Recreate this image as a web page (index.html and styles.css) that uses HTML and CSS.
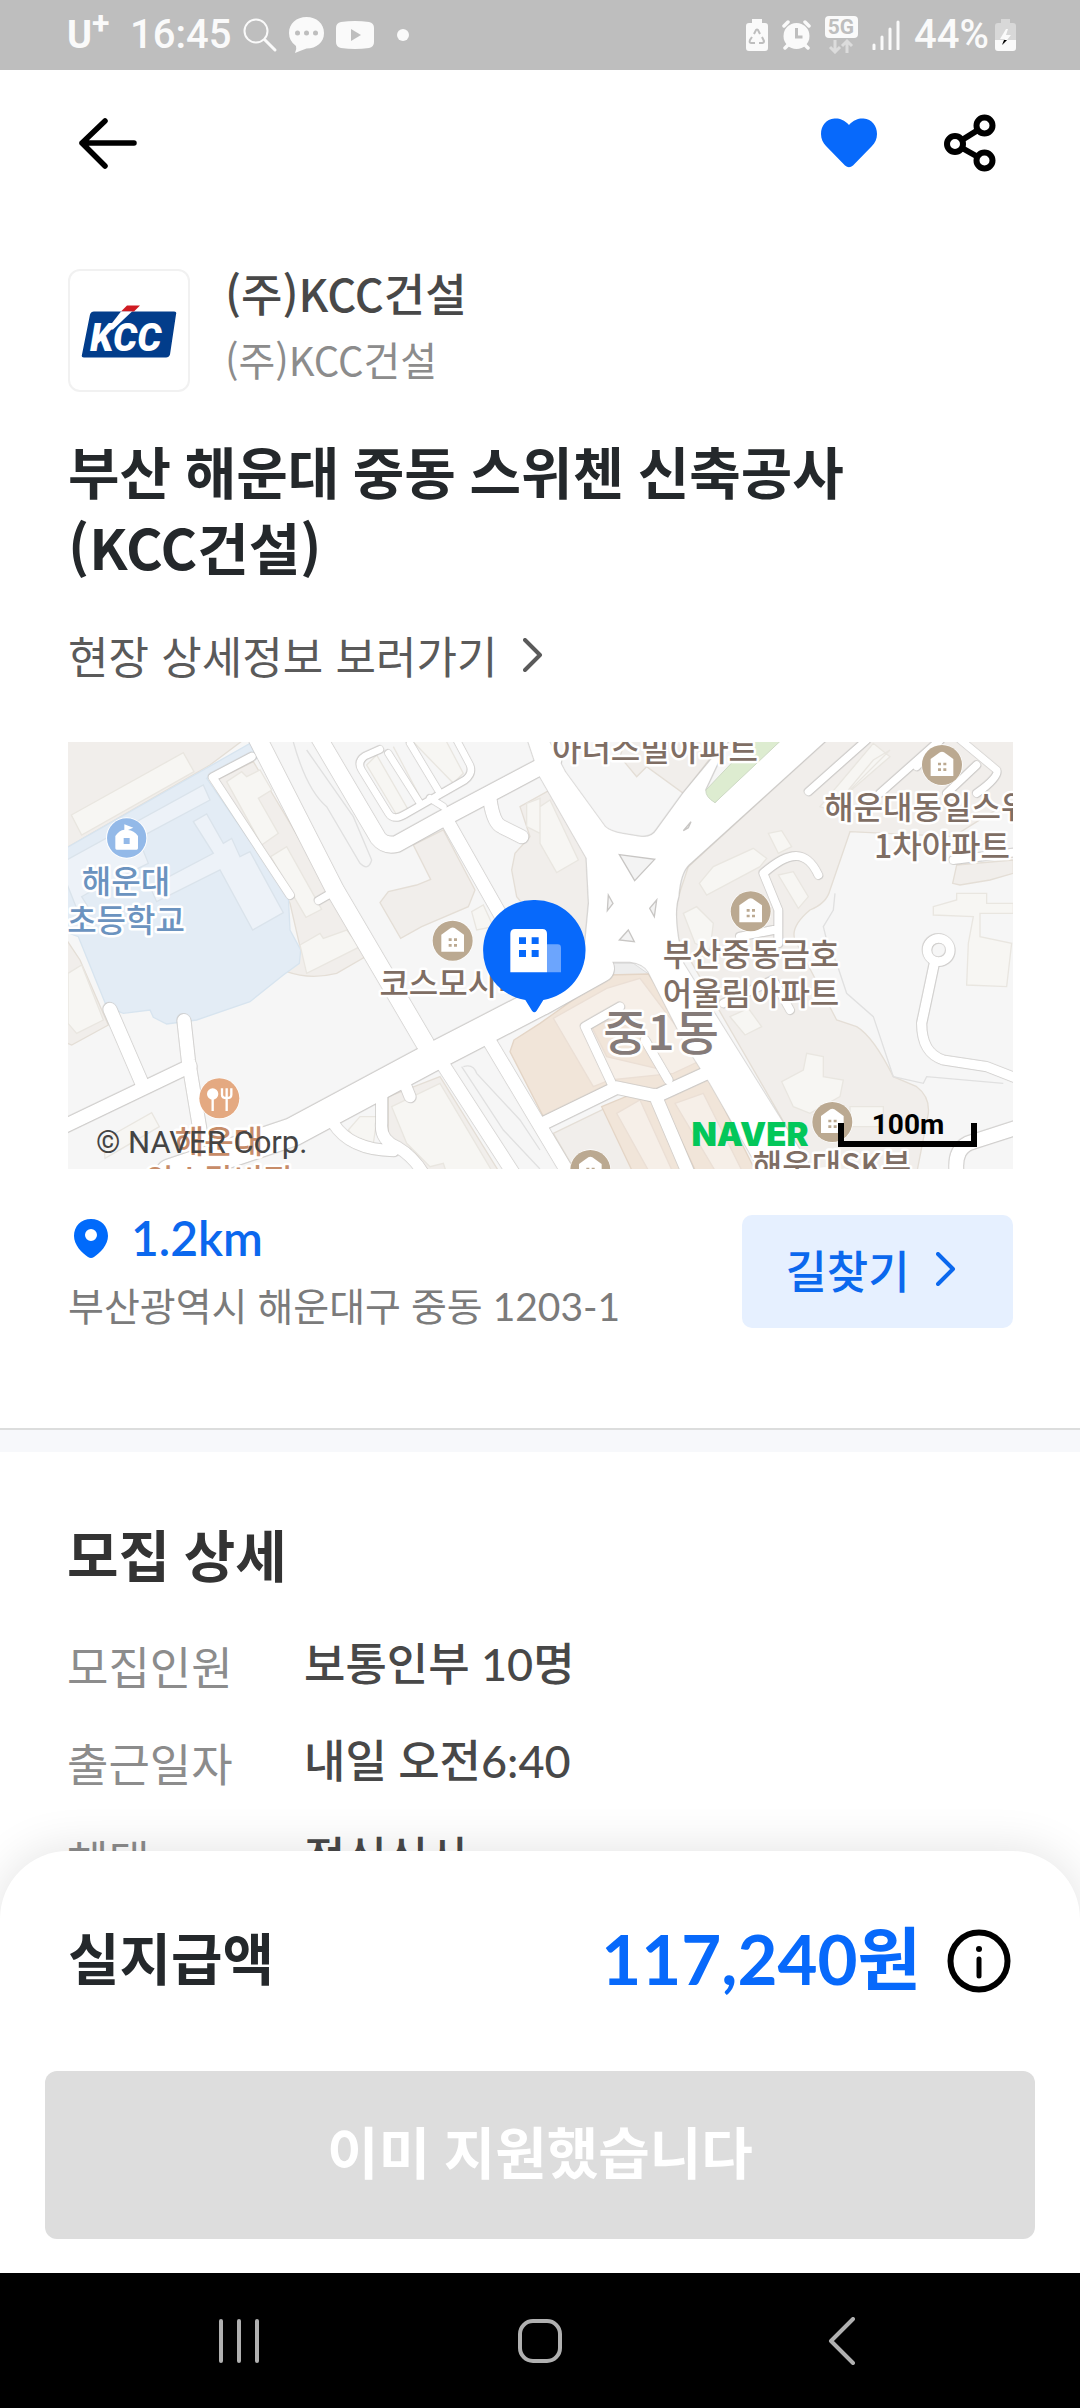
FILE: index.html
```html
<!DOCTYPE html>
<html lang="ko">
<head>
<meta charset="utf-8">
<meta name="viewport" content="width=device-width, initial-scale=1">
<title>부산 해운대 중동 스위첸 신축공사</title>
<link rel="stylesheet" href="styles.css">
</head>
<body>
<div class="status">
  <div class="status-group status-left">
    <span class="carrier">U<sup>+</sup></span>
    <span class="status-text">16:45</span>
    <svg width="36" height="36" viewBox="0 0 36 36" fill="none" stroke="#fafafa" stroke-width="2" stroke-linecap="round"><circle cx="14" cy="14" r="11.500"/><path d="M23 23l10 10" stroke-width="3"/></svg>
    <svg width="36" height="36" viewBox="0 0 36 36"><path fill="#fafafa" d="M17.500 0C27.500 0 35 6.500 35 16S27.500 31.500 17.500 31.500Q12 33.500 6 36Q8 32 7 29Q0 24 0 16C0 6.500 7.500 0 17.500 0z"/><g fill="#bebebe"><circle cx="8.500" cy="16" r="2.500"/><circle cx="17.500" cy="16" r="2.500"/><circle cx="26.500" cy="16" r="2.500"/></g></svg>
    <svg width="38" height="28" viewBox="0 0 38 28"><path fill="#fafafa" d="M5 1Q19-1 33 1Q38 2 38 7V21Q38 26 33 27Q19 29 5 27Q0 26 0 21V7Q0 2 5 1z"/><path fill="#bebebe" d="M15 8l10 6-10 6z"/></svg>
    <svg width="32" height="12" viewBox="0 0 32 12"><circle cx="18" cy="6" r="6" fill="#fafafa"/></svg>
  </div>
  <div class="status-group status-right">
    <svg width="22" height="32" viewBox="0 0 22 32"><path fill="#fafafa" d="M6 0h10v4h3q3 0 3 3v22q0 3-3 3H3q-3 0-3-3V7q0-3 3-3h3z"/><path d="M8 15l2-4q1-1 2 0l2 4M16 18l2 4q0 2-2 2h-3M9 24H5q-2 0-1-3l2-3" fill="none" stroke="#bebebe" stroke-width="2"/></svg>
    <svg width="29" height="30" viewBox="0 0 29 30"><g fill="none" stroke="#fafafa" stroke-width="3.500" stroke-linecap="round"><path d="M2 6l4-4M23 2l4 4M6 25l-3 3M23 25l3 3"/></g><circle cx="14.500" cy="16" r="13" fill="#fafafa"/><path d="M14.500 8v9h6" fill="none" stroke="#bebebe" stroke-width="3"/></svg>
    <svg width="33" height="38" viewBox="0 0 33 38"><rect width="33" height="22" rx="4" fill="#fafafa"/><text class="net" x="16" y="18" text-anchor="middle">5G</text><path d="M10 24v12M5 31l5 5 5-5M22 37V25M17 30l5-5 5 5" fill="none" stroke="#dcdcdc" stroke-width="3"/></svg>
    <svg width="28" height="30" viewBox="0 0 28 30"><path d="M2 25v4M10 17v12M18 9v20M26 2v27" stroke="#fafafa" stroke-width="3" stroke-linecap="round"/></svg>
    <span class="battery"><span class="status-text">44%</span><svg width="21" height="32" viewBox="0 0 21 32"><path fill="#d8d8d8" d="M6 0h9v4h3q3 0 3 3v14H0V7q0-3 3-3h3z"/><path fill="#fafafa" d="M0 21h21v8q0 3-3 3H3q-3 0-3-3zM11 10l-6 10h5l-2 6 8-10h-5l2-6z"/><path d="M9 21h3l-5 5z"/></svg></span>
  </div>
</div>

<header class="topbar">
  <button class="icon-button" type="button" aria-label="뒤로"><svg width="58" height="54" viewBox="0 0 58 54" fill="none" stroke="#000" stroke-width="5.500" stroke-linecap="round" stroke-linejoin="round"><path d="M26 5L3 27l23 23M3 27h52"/></svg></button>
  <div class="actions">
    <button class="icon-button" type="button" aria-label="찜하기" aria-pressed="true"><svg width="58" height="50" viewBox="0 0 58 50"><path fill="#0769fb" d="M29 7C24 1 18 0 14.500 0.500C6 1 1 8 1 16C1 21 3 25 6 28L25 47.500Q29 51 33 47.500L52 28C55 25 57 21 57 16C57 8 52 1 43.500 0.500C40 0 34 1 29 7z"/></svg></button>
    <button class="icon-button" type="button" aria-label="공유"><svg width="52" height="58" viewBox="0 0 52 58" fill="none" stroke="#000" stroke-width="6"><circle cx="11" cy="30" r="8"/><circle cx="40.500" cy="11.500" r="8"/><circle cx="40.500" cy="46.500" r="8"/><path d="M18 26l16-10M18 34l16 9"/></svg></button>
  </div>
</header>

<main class="content">
  <section class="job">
    <div class="company">
      <svg class="logo" viewBox="0 0 118 118" role="img" aria-label="KCC"><path fill="#023d8b" d="M24 40H104Q107 40 106 43L100 83Q99 86 96 86H14Q11 86 12 83L20 43Q21 40 24 40z"/><path fill="#cf1b22" d="M57 34h13l-6 6H51z"/><path fill="#fff" d="M51 40h11L43 58h-6z"/><text class="logo-text" x="20" y="79">KCC</text></svg>
      <div class="company-names">
        <p class="company-name">(주)KCC건설</p>
        <p class="company-sub">(주)KCC건설</p>
      </div>
    </div>
    <h1 class="title">부산 해운대 중동 스위첸 신축공사<span class="builder">(KCC건설)</span></h1>
    <a class="detail-link" href="#site">현장 상세정보 보러가기<svg width="20" height="34" viewBox="0 0 20 34" fill="none" stroke="currentColor" stroke-width="4" stroke-linecap="round" stroke-linejoin="round"><path d="M2 2l15 15L2 32"/></svg></a>

    <svg class="map" viewBox="0 0 945 427" role="img" aria-label="현장 지도">
      <defs>
        <g id="poi"><circle r="62" fill="#fff"/><circle r="60" fill="#bba991"/><path fill="#fff" d="M-34 33V-18L-6-38Q0-41 6-38L34-18V33z"/><path fill="#bba991" d="M-12-7h9v8h-9zM4-7h9v8H4zM-12 10h9v8h-9zM4 10h9v8H4z"/></g>
      </defs>
      <rect width="945" height="427" fill="#f6f6f6"/>
      <g transform="translate(-8 -12) scale(0.33333)">
        <g fill="#f1eeeb" stroke="#e4ded6" stroke-width="4">
          <path d="M0 0H590L450 105L0 365z"/>
          <path d="M470 150L580 95L925 675L830 730Q750 750 680 725L720 650L690 520z"/>
          <path d="M0 600L60 690L145 885L35 945L0 930z"/>
          <path d="M1060 345L1150 300L1245 480L1225 530L1085 590L1022 625L960 518L985 485L1070 465L1112 448z"/>
          <path d="M1380 230L1470 180L1590 400L1585 640L1420 560L1370 500L1355 420L1365 370L1410 320z"/>
          <path d="M1680 80L1700 20H2000L1870 190L1760 110L1730 140z"/>
          <path d="M1885 410L2310 20H2870V210L2790 250L2680 320L2370 305L2310 480Q2300 520 2250 540Q2190 590 2205 630L2330 870L2390 890Q2440 920 2500 1040L2570 1070Q2610 1100 2605 1150L2570 1330H2260L1850 620Q1840 560 1855 500z"/>
          <path d="M2690 405L2860 390V430L2790 450L2700 465L2678 460z"/>
          <path d="M985 1100L1140 1040L1320 1330H1110L1060 1260L985 1230zM1480 1210L1635 1135L1730 1330H1550z"/>
        </g>
        <path fill="#e3ecf5" stroke="#d7e4ef" stroke-width="4" d="M0 365L570 40L590 85L440 145L685 500L690 600L722 660L718 700L670 735L570 815L410 870L320 882L280 862L270 840L190 850L140 830L55 620L0 600z"/>
        <g fill="#edf2f8" stroke="#dae3eb" stroke-width="4">
          <path d="M20 390L430 165L450 210L235 325L265 400L100 480L65 500L90 540L60 560L20 460z"/>
          <path d="M400 275L440 252L490 340L515 325L540 380L570 365L670 548L578 600L480 420L290 515L270 470L460 370z"/>
        </g>
        <g fill="#f7f6f3" stroke="#e9e6e0" stroke-width="4">
          <path d="M34 255L370 68L402 125L65 315z"/>
          <path d="M500 155L545 125L560 140L600 120L635 180L595 205L655 310L605 345z"/>
          <path d="M632 380L680 350L785 538L738 562z"/>
          <path d="M720 645L780 610L790 625L860 600L900 650L740 730z"/>
          <path d="M24 730L65 705L130 870L50 910L24 880z"/>
          <path d="M130 1230L275 1148L298 1190L135 1285zM865 1200L900 1160L952 1160L940 1240L880 1220z"/>
          <path d="M995 1130L1140 1060L1300 1330H1160L1150 1300L1110 1310L1040 1240z"/>
          <path d="M1400 220L1440 205V310L1400 290zM1440 230L1470 210L1555 390L1490 428L1440 340z"/>
          <path d="M1235 545L1270 525L1300 590L1250 600z"/>
          <path d="M1918 460L1960 410L2080 355L2120 385L2100 410L1940 495z"/>
          <path d="M2155 435L2200 425L2245 500L2215 535zM1870 550L1910 530L1960 580L1950 660L1905 640z"/>
          <path d="M2125 310L2165 302L2195 350L2155 370z"/>
          <path d="M2165 1055L2230 1020L2240 970L2290 980V1040L2350 1050L2340 1100L2250 1150L2200 1130z"/>
          <path d="M2010 860L2065 835L2105 890L2055 915z"/>
          <path d="M2340 210L2440 90L2490 60L2310 240L2280 230L2440 40L2490 80zM2370 1130H2470V1190H2370z"/>
          <path d="M920 105L950 75L1045 240L1010 255zM1000 50L1085 210M1060 36L1180 160L1210 130L1160 36"/>
          <path d="M2620 530L2690 510V490H2780V520H2860V550H2760V620L2855 640L2840 770L2720 765L2725 640L2740 560L2620 555z"/>
        </g>
        <path fill="#ededed" stroke="#ddd" stroke-width="3" d="M1440 895L1500 840L1640 700H1720L1770 735L1650 735z"/>
        <g fill="#f1e5d9" stroke="#e4d5c6" stroke-width="4">
          <path d="M1362 930L1440 880L1645 735L1765 732L1945 1015L1850 1055L1780 1080L1650 1062L1450 1160L1350 965z"/>
          <path d="M1625 1130L1710 1095L1790 1120L1870 1330H1720zM1805 1105L1945 1040L2090 1330H1910z"/>
        </g>
        <g fill="#f6efe8" stroke="#ebdfd5" stroke-width="4">
          <path d="M1480 865L1640 775L1740 745L1925 990L1840 1030L1650 1050L1600 1070z"/>
          <path fill="#f1e5d9" d="M1595 890L1700 850L1810 1020L1640 980z"/>
          <path d="M1670 1150L1740 1110L1840 1330H1770zM1845 1120L1930 1090L2050 1330H1970z"/>
        </g>
        <path fill="none" stroke="#e0e0e0" stroke-width="4" d="M700 36Q740 180 800 230L900 400Q925 425 935 390L880 260L740 60M1205 1010L1330 1200L1440 1317M1210 1010Q1240 1000 1250 1030L1380 1170L1440 1260M2325 490L2320 540L2290 590L2300 630L2330 700L2360 790L2440 860L2500 1040L2590 1060L2600 1040L2830 1060"/>
        <g class="roads">
          <path d="M590 20L825 480L1095 940" stroke-width="54"/>
          <path d="M575 80L458 142L690 495" stroke-width="24"/>
          <path d="M775 512L830 480" stroke-width="22"/>
          <path d="M10 1190L390 1008" stroke-width="40"/>
          <path d="M150 838L248 1065M372 872L385 990L425 1230" stroke-width="40"/>
          <path d="M330 1330L700 1205L1110 985L1440 815L1620 715" stroke-width="84"/>
          <path d="M775 20L955 325Q975 350 1010 342L1140 270L1480 90" stroke-width="48"/>
          <path d="M1160 270L1330 570L1420 700" stroke-width="40"/>
          <path d="M1150 230L1110 205M1040 250Q1000 275 985 250L905 120Q890 95 915 78L960 58M1190 30L1230 105Q1240 130 1215 150L1040 250M985 70L1080 220M1050 40L1140 190" stroke-width="20"/>
          <path d="M1290 210Q1300 280 1325 290L1385 320" stroke-width="40"/>
          <path d="M1140 990L1360 1330M1280 920L1525 1330" stroke-width="40"/>
          <path d="M965 1090V1180Q960 1230 1010 1250Q1060 1280 1090 1330M820 1180Q870 1260 1000 1262M1030 1050L1050 1100" stroke-width="34"/>
          <path d="M1440 1185L1670 1073L1790 1098L1960 1020M1785 1095L1885 1330" stroke-width="38"/>
          <path d="M1655 1060L1575 890L1680 830M1825 1050L1755 930" stroke-width="26"/>
          <path d="M2275 435C2240 360 2190 360 2110 430L2155 540V640M2040 620L2140 600M1990 820L2140 750L2190 840" stroke-width="24"/>
          <path d="M2624 695L2585 880Q2585 970 2650 990L2780 1010L2870 1045" stroke-width="28"/>
          <circle cx="2636" cy="660" r="35" stroke-width="26"/>
          <path d="M2245 185L2420 30M2460 190L2640 30M2570 110L2650 20M2690 20L2810 120Q2820 140 2750 190M2660 190L2750 105" stroke-width="22"/>
          <path d="M2690 1330Q2680 1250 2740 1235L2880 1190" stroke-width="42"/>
          <path d="M2680 390L2880 365" stroke-width="24"/>
          <path fill="#fff" d="M1400 20L1440 140L1580 385L1587 520L1570 700L1620 695H1710Q1750 700 1765 725L1880 950L1950 1060L2110 1340H2270L1870 700Q1835 560 1855 500Q1860 430 1885 405L2310 20H2150L1965 220L1935 180L2010 20L1870 190L1790 300Q1775 325 1740 320L1690 312Q1650 305 1635 290L1515 125L1460 20z"/>
        </g>
        <path fill="#ddecd0" stroke="#cdd9c4" stroke-width="3" d="M1938 180L2090 20H2175L1965 218Q1935 200 1938 180z"/>
        <path fill="#f3f3f3" stroke="#c8c6c4" stroke-width="4" d="M1678 374L1784 388L1724 452zM1645 495L1659 520L1642 542zM1790 510L1769 535L1783 560zM1705 600L1723 635L1678 630zM1893 275L1870 302L1885 293z"/>
        <g><circle cx="200" cy="324" r="62" fill="#fff"/><circle cx="200" cy="324" r="59" fill="#93b9e8"/><path fill="#fff" d="M166 355V318Q178 300 193 299V283L220 293L204 300Q222 301 234 318V355Q234 359 230 359H170Q166 359 166 355z"/><path fill="#93b9e8" d="M191 324h18v18h-18z"/></g>
        <g><circle cx="478" cy="1105" r="62" fill="#fff"/><circle cx="478" cy="1105" r="60" fill="#e4a981"/><circle cx="458" cy="1092" r="17" fill="#fff"/><path fill="none" stroke="#fff" stroke-width="7" d="M458 1100V1143M486 1075V1094Q486 1104 500 1104T514 1094V1075M500 1075V1143"/></g>
        <use href="#poi" x="1178" y="632"/>
        <use href="#poi" x="2646" y="105"/>
        <use href="#poi" x="2072" y="544"/>
        <use href="#poi" x="2317" y="1176"/>
        <use href="#poi" x="1591" y="1320"/>
      </g>
      <g class="place">
        <text class="school" x="58" y="151">해운대</text>
        <text class="school" x="58" y="190">초등학교</text>
        <text class="food" x="151" y="411">해운대</text>
        <text class="food" x="151" y="450">암소갈비집</text>
        <text x="385" y="253">코스모시티</text>
        <text x="587" y="19">아너스빌아파트</text>
        <text x="874" y="77">해운대동일스위첸</text>
        <text x="874" y="116">1차아파트</text>
        <text x="683" y="224">부산중동금호</text>
        <text x="683" y="263">어울림아파트</text>
        <text x="764" y="435">해운대SK뷰</text>
        <text class="district" x="593" y="308">중1동</text>
      </g>
      <g transform="translate(-8 -12) scale(0.33333)">
        <path fill="#0769fb" d="M1423 510A151 151 0 0 1 1450 810L1430 842Q1423 852 1416 842L1396 810A151 151 0 0 1 1423 510z"/>
        <path fill="#6ca5fd" d="M1461 643H1493Q1503 643 1503 653V727H1461z"/>
        <path fill="#fff" d="M1351 727V611Q1351 597 1365 597H1447Q1461 597 1461 611V727z"/>
        <path fill="#0769fb" d="M1377 622h21v20h-21zM1415 622h21v20h-21zM1377 660h21v21h-21zM1415 660h21v21h-21z"/>
      </g>
      <text class="naver" x="682" y="404" text-anchor="middle">NAVER</text>
      <path d="M773 381V402H906V381" fill="none" stroke="#000" stroke-width="6"/>
      <text class="scale" x="840" y="392" text-anchor="middle">100m</text>
      <text class="copyright" x="28" y="411">© NAVER Corp.</text>
    </svg>

    <div class="location">
      <div>
        <p class="distance"><svg width="46" height="45" viewBox="0 0 46 45"><path fill="#006afb" fill-rule="evenodd" d="M23 3C13 3 6 10 6 20C6 29 14 37 20 41Q23 43 26 41C32 37 40 29 40 20C40 10 33 3 23 3zM23 13A6 6 0 1 1 23 25A6 6 0 1 1 23 13z"/></svg>1.2km</p>
        <p class="address">부산광역시 해운대구 중동 1203-1</p>
      </div>
      <button class="route" type="button">길찾기<svg width="20" height="34" viewBox="0 0 20 34" fill="none" stroke="currentColor" stroke-width="4" stroke-linecap="round" stroke-linejoin="round"><path d="M2 2l15 15L2 32"/></svg></button>
    </div>
  </section>

  <section class="recruit">
    <h2 class="section-title">모집 상세</h2>
    <dl class="details">
      <dt>모집인원</dt><dd>보통인부 10명</dd>
      <dt>출근일자</dt><dd>내일 오전6:40</dd>
      <dt>혜택</dt><dd>점심식사</dd>
    </dl>
  </section>
</main>

<footer class="sheet">
  <div class="pay">
    <span class="pay-label">실지급액</span>
    <span class="pay-amount">117,240원</span>
    <button class="icon-button" type="button" aria-label="지급액 안내"><svg width="64" height="64" viewBox="0 0 64 64" fill="none" stroke="#000"><circle cx="32" cy="32" r="28.500" stroke-width="6"/><path d="M32 30v17" stroke-width="5" stroke-linecap="round"/><circle cx="32" cy="20" r="3" fill="#000" stroke="none"/></svg></button>
  </div>
  <button class="apply" type="button" disabled>이미 지원했습니다</button>
</footer>

<nav class="system-nav">
  <button class="icon-button" type="button" aria-label="최근 앱"><svg width="44" height="44" viewBox="0 0 44 44"><path d="M4 2v40M22 2v40M40 2v40" stroke="#b0b0b0" stroke-width="4" stroke-linecap="round"/></svg></button>
  <button class="icon-button" type="button" aria-label="홈"><svg width="44" height="44" viewBox="0 0 44 44"><rect x="2" y="2" width="40" height="40" rx="13" fill="none" stroke="#b0b0b0" stroke-width="4"/></svg></button>
  <button class="icon-button" type="button" aria-label="이전"><svg width="44" height="48" viewBox="0 0 44 48"><path d="M34 2L12 24l22 22" fill="none" stroke="#b0b0b0" stroke-width="4" stroke-linecap="round" stroke-linejoin="round"/></svg></button>
</nav>
</body>
</html>
```
FILE: styles.css
```css
* {
  box-sizing: border-box;
}

body {
  margin: 0;
  height: 100vh;
  display: flex;
  flex-direction: column;
  background: #fff;
  color: #484848;
  font-family: Lato, "Noto Sans CJK KR", sans-serif;
  word-break: keep-all;
}

p, h1, h2, dl, dd {
  margin: 0;
}

svg {
  display: block;
  flex: none;
}

button {
  border: 0;
  font: inherit;
  cursor: pointer;
}

.icon-button {
  padding: 0;
  background: none;
}

/* System status bar */
.status {
  flex: none;
  height: 70px;
  padding: 0 64px 0 67px;
  display: flex;
  justify-content: space-between;
  align-items: center;
  background: #bebebe;
  color: #fafafa;
  font-family: Roboto, sans-serif;
}

.status-group,
.battery {
  display: flex;
  align-items: center;
}

.status-left {
  gap: 11px;
}

.status-right {
  gap: 14px;
}

.battery {
  gap: 6px;
}

.status-text {
  font-size: 40px;
  line-height: 70px;
  font-weight: 500;
}

.carrier {
  width: 52px;
  font-size: 38px;
  line-height: 70px;
  font-weight: 700;
}

.carrier sup {
  font-size: 32px;
  line-height: 0;
}

.net {
  font-size: 21px;
  font-weight: 700;
  fill: #bebebe;
}

/* App header */
.topbar {
  flex: none;
  height: 146px;
  padding: 0 84px 0 79px;
  display: flex;
  justify-content: space-between;
  align-items: center;
}

.actions {
  display: flex;
  align-items: center;
  gap: 66px;
}

.content {
  flex: 1;
  min-height: 0;
  overflow-y: auto;
  scrollbar-width: none;
}

/* Job summary */
.job {
  padding: 53px 67px 96px 68px;
  border-bottom: 2px solid #dcdddd;
}

.company {
  display: flex;
  gap: 35px;
}

.company-names,
.builder,
.detail-link,
.place {
  font-family: "Noto Sans CJK KR", sans-serif;
}

.logo {
  width: 122px;
  height: 123px;
  border: 2px solid #f1f1f1;
  border-radius: 12px;
}

.logo-text {
  font: italic 900 38px Roboto, sans-serif;
  fill: #fff;
}

.company-name {
  font-size: 45px;
  line-height: 48px;
  font-weight: 500;
}

.company-sub {
  margin-top: 12px;
  font-size: 40px;
  line-height: 60px;
  color: #8c8c8c;
}

.title {
  margin-top: 44px;
  font-size: 56px;
  line-height: 73px;
  font-weight: 700;
  color: #24282b;
}

.builder {
  display: block;
}

.detail-link {
  margin-top: 37px;
  display: flex;
  align-items: center;
  gap: 26px;
  font-size: 44px;
  line-height: 72px;
  color: #5a5a5a;
  text-decoration: none;
}

.map {
  width: 100%;
  height: auto;
  margin-top: 51px;
}

.place {
  font-size: 32px;
  font-weight: 500;
  text-anchor: middle;
  fill: #7f6e64;
  stroke: #fff;
  stroke-width: 5px;
  stroke-linejoin: round;
  paint-order: stroke;
}

.school {
  fill: #6b93bf;
}

.food {
  fill: #c78c68;
}

.district {
  font-size: 48px;
  fill: #857b79;
}

/* White streets with a hairline edge on each side */
.roads {
  fill: none;
  stroke: #fff;
  stroke-linecap: round;
  stroke-linejoin: round;
  filter: drop-shadow(2px 2px 0 #c6c4c2) drop-shadow(-2px -2px 0 #c6c4c2);
}

.naver {
  font-family: Inter, sans-serif;
  font-size: 33px;
  font-weight: 900;
  fill: #03c75a;
}

.scale {
  font-family: Roboto, sans-serif;
  font-size: 28px;
  font-weight: 700;
}

.copyright {
  font-family: Roboto, sans-serif;
  font-size: 31px;
  fill: #444;
}

.location {
  margin-top: 41px;
  display: flex;
  justify-content: space-between;
  align-items: center;
}

.distance {
  display: flex;
  align-items: center;
  gap: 17px;
  font-size: 48px;
  line-height: 56px;
  font-weight: 600;
  color: #0b68ee;
}

.address {
  margin-top: 14px;
  font-size: 39px;
  line-height: 52px;
  color: #7b7b7b;
}

.route {
  width: 271px;
  height: 113px;
  padding: 0 14px 4px 0;
  display: flex;
  justify-content: center;
  align-items: center;
  gap: 26px;
  border-radius: 10px;
  background: #e6f0ff;
  color: #0b68ee;
  font-size: 45px;
  font-weight: 500;
}

/* Recruitment details */
.recruit {
  padding: 68px 67px;
  border-top: 22px solid #f7f8fb;
}

.section-title {
  font-size: 56px;
  line-height: 72px;
  font-weight: 700;
  color: #333;
}

.details {
  margin-top: 36px;
  display: grid;
  grid-template-columns: 237px 1fr;
  row-gap: 25px;
  font-size: 45px;
  line-height: 72px;
}

.details dt {
  padding-top: 8px;
  line-height: 64px;
  color: #8c8c8c;
}

.details dd {
  font-weight: 500;
}

/* Payment sheet */
.sheet {
  position: relative;
  flex: none;
  margin-top: -68px;
  padding: 60px 45px 34px;
  border-radius: 68px 68px 0 0;
  background: #fff;
  box-shadow: 0 0 48px rgba(0, 0, 0, 0.12);
}

.pay {
  height: 100px;
  margin-bottom: 60px;
  padding: 0 24px 0 23px;
  display: flex;
  align-items: center;
}

.pay-label {
  flex: 1;
  padding-bottom: 4px;
  font-size: 56px;
  line-height: 72px;
  font-weight: 700;
  color: #24282b;
}

.pay-amount {
  margin-right: 26px;
  padding-bottom: 4px;
  font-size: 69px;
  line-height: 96px;
  font-weight: 700;
  color: #0769fb;
}

.apply {
  width: 100%;
  height: 168px;
  padding: 0 0 12px;
  border-radius: 12px;
  background: #ddd;
  color: #fff;
  font-size: 56px;
  font-weight: 700;
}

/* System navigation */
.system-nav {
  position: relative;
  flex: none;
  height: 135px;
  padding: 0 217px;
  display: flex;
  justify-content: space-between;
  align-items: center;
  background: #000;
}
```
